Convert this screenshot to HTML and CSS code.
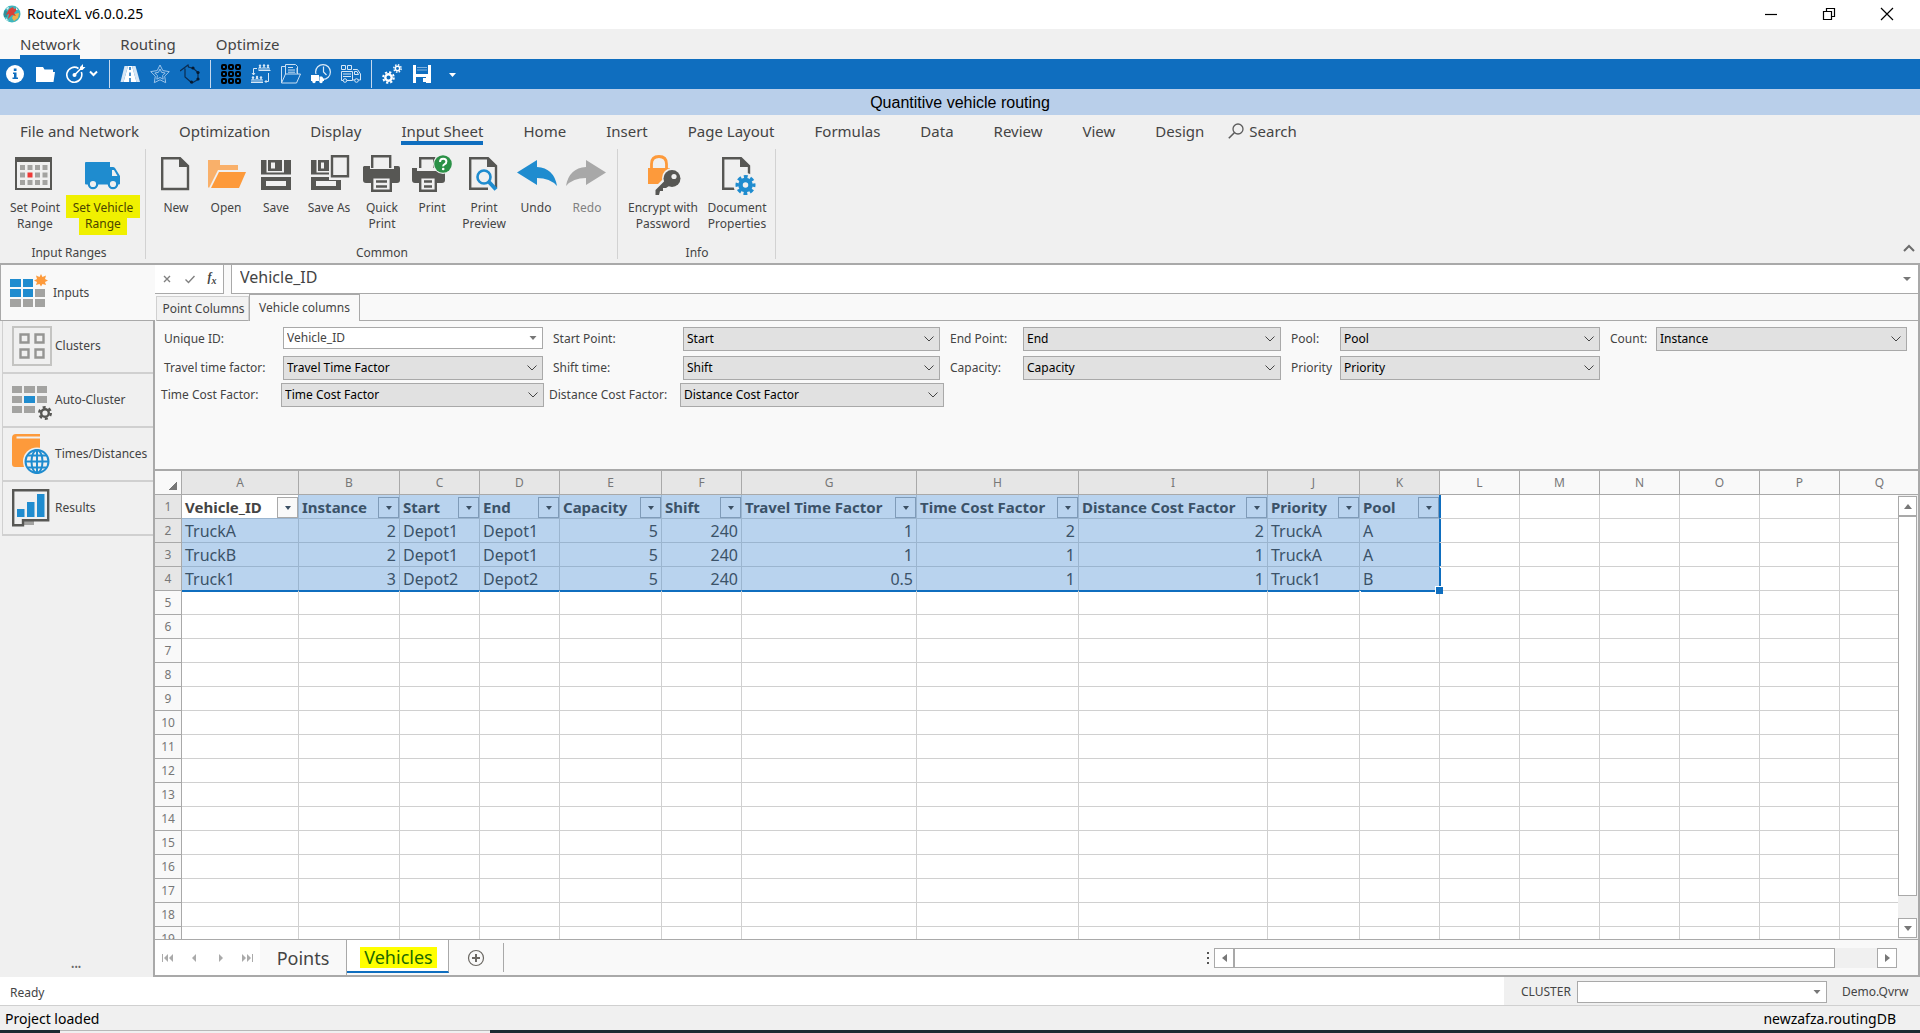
FILE: index.html
```html
<!DOCTYPE html>
<html lang="en">
<head>
<meta charset="utf-8">
<title>RouteXL v6.0.0.25</title>
<link rel="stylesheet" href="styles.css">
</head>
<body>
<header class="titlebar">
  <svg class="app-logo" viewBox="0 0 18 18" aria-hidden="true"><circle cx="9" cy="9" r="8.500" fill="#3fb6bd"/><path d="M1 12a8.500 8.500 0 0 1 1-7l3 2-1 5z" fill="#2f8f9a"/><path d="M11 9l5-1-1 5-4 3-2-3z" fill="#f0b24a"/><path d="M6 4l4-2 1 2 3-1-1 3-2 2 2 3-4-1-4 4 1-5-3 1 2-4z" fill="#d8413a"/><path d="M3 3l3-1-1 3zM13 2l2 3h-2zM3 13l3 3-3-1z" fill="#d9f3f4"/></svg>
  <span class="app-title">RouteXL v6.0.0.25</span>
  <div class="window-buttons">
    <button aria-label="Minimize"><svg viewBox="0 0 14 14"><path d="M1 7.500h12"/></svg></button>
    <button aria-label="Restore"><svg viewBox="0 0 14 14"><path d="M1.500 4.500h8v8h-8zM4.500 4V1.500h8v8H10"/></svg></button>
    <button aria-label="Close"><svg viewBox="0 0 14 14"><path d="M1 1l12 12M13 1L1 13"/></svg></button>
  </div>
</header>

<nav class="page-tabs">
  <button class="page-tab active"><span>Network</span></button>
  <button class="page-tab"><span>Routing</span></button>
  <button class="page-tab"><span>Optimize</span></button>
</nav>

<div class="quickbar">
  <button aria-label="Info"><svg viewBox="0 0 20 20"><circle cx="10" cy="10" r="9" fill="#fff"/><path d="M8 8.500h3.500v5H13V15H7.500v-1.500H9V10H8zM8.800 4.500h2.700V7H8.800z" fill="#0f6ebf"/></svg></button>
  <button aria-label="Open folder"><svg viewBox="0 0 20 20"><path d="M1 3h7l1.500 2.500H18V8h2l-1.500 10H1z" fill="#fff"/></svg></button>
  <button class="wide" aria-label="Target"><svg viewBox="0 0 32 20"><g fill="none" stroke="#fff" stroke-width="1.600"><path d="M12.500 4.500a7.500 7.500 0 1 0 2.800 3.500M8.500 11l7-7"/><path d="M24 7.500l3.500 3.500L31 7.500" stroke-width="2"/></g><path d="M14 3l3-3v3h2.500l-3 3H14z" fill="#fff"/><circle cx="8.500" cy="11" r="2" fill="#fff"/></svg></button>
  <i class="bar-sep"></i>
  <button aria-label="Road"><svg viewBox="0 0 20 20"><path d="M4.500 2H8L3.500 18H.500zM12 2h3.500L20 18h-3.500z" fill="#d6e6f5"/><path d="M8 2h4l4.500 16h-13z" fill="#fff"/><path d="M10 3v3M10 8.500v3.500M10 14v4" stroke="#0f6ebf" stroke-width="1.500"/></svg></button>
  <button aria-label="Star"><svg viewBox="0 0 20 20"><g fill="none" stroke="#9cc4ea"><path d="M10 1l2.800 5.600 6.500 1-4.600 4.600 1 6.500L10 15.800l-5.700 2.900 1-6.500L.700 7.600l6.500-1z"/><path d="M10 5l1.600 3.400 3.600.6-2.600 2.600.6 3.600L10 13.500l-3.200 1.700.6-3.600L4.800 9l3.600-.6z"/></g></svg></button>
  <button aria-label="Polygon"><svg viewBox="0 0 20 20"><path d="M0 7l8-6 .5 2 5 1.500 4.500 4v7L12 19l-7-6V4.500" fill="none" stroke="#0b2c50" stroke-width="1.200"/><g fill="#061a30"><circle cx="13" cy="4" r="1.600"/><circle cx="18" cy="8.500" r="1.600"/><circle cx="18" cy="15" r="1.600"/><circle cx="11.500" cy="18" r="1.600"/></g></svg></button>
  <i class="bar-sep"></i>
  <button aria-label="Matrix"><svg viewBox="0 0 20 20"><g fill="none" stroke="#000" stroke-width="2"><rect x="1" y="1" width="4" height="4" rx="1"/><rect x="8" y="1" width="4" height="4" rx="1"/><rect x="15" y="1" width="4" height="4" rx="1"/><rect x="1" y="8" width="4" height="4" rx="1"/><rect x="8" y="8" width="4" height="4" rx="1"/><rect x="15" y="8" width="4" height="4" rx="1"/><rect x="1" y="15" width="4" height="4" rx="1"/><rect x="8" y="15" width="4" height="4" rx="1"/><rect x="15" y="15" width="4" height="4" rx="1"/></g></svg></button>
  <button aria-label="Groups"><svg viewBox="0 0 20 20"><g fill="none" stroke="#d6e7f6"><path d="M8 6V3.500h2V6M12 6V3h2v3M16 6V3.500h2V6M7.500 6.500h12M1 18v-3h2v3M5 18v-3.500h2V18M9 18v-3h2v3M0 18.500h12M6 4.500H2.500V11M1 9l1.500 2L4 9M17.500 9v8.500H14M15.500 16L14 17.500l1.500 1.500"/></g><g fill="#d6e7f6"><circle cx="9" cy="1.800" r="1.200"/><circle cx="13" cy="1.500" r="1.200"/><circle cx="17" cy="1.800" r="1.200"/><circle cx="2" cy="13.500" r="1.200"/><circle cx="6" cy="13" r="1.200"/><circle cx="10" cy="13.500" r="1.200"/></g></svg></button>
  <button aria-label="Documents"><svg viewBox="0 0 20 20"><path d="M.500 19V2.500H4M16 4v5M.500 19L4.500 10h15L15.500 19zM4.500 10V.500h10l2 2V10M7 3.500h5M7 6h7M7 8.200h7" fill="none" stroke="#c9dff3"/></svg></button>
  <button aria-label="Schedule"><svg viewBox="0 0 20 20"><circle cx="12" cy="8" r="7.400" fill="none" stroke="#dceaf7" stroke-width="1.200"/><path d="M12.500 2.500V8l3 3" fill="none" stroke="#dceaf7" stroke-width="1.200"/><path d="M0 10h9l4 2v8H0z" fill="#0f6ebf"/><path d="M0 11h8v6H0zM8.500 12.500H11l2 2.500v2H8.500z" fill="#fff"/><circle cx="3" cy="17.500" r="1.700" fill="#fff"/><circle cx="10" cy="17.500" r="1.700" fill="#fff"/></svg></button>
  <button aria-label="Fleet"><svg viewBox="0 0 20 20"><path d="M.500 1.500h4v4h-4zM6.500 1.500h4v4h-4zM.500 7.500h11v9H.500zM12 5.500h4.500l3 4.500v6H12M13.500 7.500h2.500l1.500 3h-4zM2 10h8M2 12.500h8" fill="none" stroke="#d6e7f6"/><circle cx="4" cy="16.500" r="1.800" fill="#0f6ebf" stroke="#d6e7f6"/><circle cx="15.500" cy="16.500" r="1.800" fill="#0f6ebf" stroke="#d6e7f6"/></svg></button>
  <i class="bar-sep"></i>
  <button aria-label="Settings"><svg viewBox="0 0 20 20"><g fill="none" stroke="#fff"><circle cx="6.500" cy="13.500" r="3.200" stroke-width="2.400"/><circle cx="6.500" cy="13.500" r="5.300" stroke-width="2" stroke-dasharray="2.200 1.960"/><circle cx="15.500" cy="4.500" r="2.200" stroke-width="1.500"/><circle cx="15.500" cy="4.500" r="3.700" stroke-width="1.400" stroke-dasharray="1.500 1.400"/></g></svg></button>
  <button aria-label="Save project"><svg viewBox="0 0 20 20"><path d="M1 1h18v18H1z" fill="#fff"/><path d="M4 1h12v9H4zM4 13h10v6H4z" fill="#0f6ebf"/><path d="M5 3.500h10M5 6h10" stroke="#7fb0de"/><path d="M11 14h3v4h-3z" fill="#fff"/></svg></button>
  <button aria-label="More"><svg viewBox="0 0 20 20"><path d="M7 9h7l-3.500 4z" fill="#fff"/></svg></button>
</div>

<div class="doc-title">Quantitive vehicle routing</div>

<nav class="ribbon-tabs">
  <button>File and Network</button>
  <button>Optimization</button>
  <button>Display</button>
  <button class="active">Input Sheet</button>
  <button>Home</button>
  <button>Insert</button>
  <button>Page Layout</button>
  <button>Formulas</button>
  <button>Data</button>
  <button>Review</button>
  <button>View</button>
  <button>Design</button>
  <button class="search"><svg viewBox="0 0 16 16"><circle cx="10" cy="6" r="5" fill="none" stroke="#5c5c5c" stroke-width="1.300"/><path d="M6.300 9.700L.800 15.200" stroke="#5c5c5c" stroke-width="1.600"/></svg>Search</button>
</nav>

<section class="ribbon">
  <div class="ribbon-group">
    <div class="ribbon-items">
      <button class="tool w68"><svg viewBox="0 0 44 44"><path d="M3 5h35v31H3z" fill="none" stroke="#575754" stroke-width="2"/><path d="M2 4h37v5H2z" fill="#575754"/><path d="M7 12h5v5H7zM14.500 12h5v5h-5zM22 12h5v5h-5zM29.500 12h5v5h-5zM7 19.500h5v5H7zM22 19.500h5v5h-5zM29.500 19.500h5v5h-5zM7 27h5v5H7zM14.500 27h5v5h-5zM22 27h5v5h-5zM29.500 27h5v5h-5z" fill="#a3a3a1"/><path d="M14.500 19.500h5v5h-5z" fill="#ee3a38"/></svg><span>Set Point<br>Range</span></button>
      <button class="tool w68 marked"><svg viewBox="0 0 44 44"><path d="M4 10q0-1 1-1h24v5h3q1 0 2 1l5 8v7.500q0 1-1 1H5q-1 0-1-1z" fill="#1f8ccf"/><path d="M31 17h2l3.500 6H31z" fill="#f0f0f0"/><g fill="#f0f0f0" stroke="#1f8ccf" stroke-width="2.200"><circle cx="12" cy="31" r="4.200"/><circle cx="32" cy="31" r="4.200"/></g></svg><span><mark>Set Vehicle</mark><br><mark class="short">Range</mark></span></button>
    </div>
    <h2>Input Ranges</h2>
  </div>
  <div class="ribbon-group">
    <div class="ribbon-items">
      <button class="tool w50"><svg viewBox="0 0 44 44"><path d="M8.200 5.200H26L34 13v23H8.200z" fill="none" stroke="#575754" stroke-width="2.400"/><path d="M25 4l10 10H25z" fill="#575754"/></svg><span>New</span></button>
      <button class="tool w50"><svg viewBox="0 0 44 44"><path d="M4 7h12v5h18v5H14L5 35l-1-1z" fill="#f9b06a"/><path d="M15 19h27l-7 16H7z" fill="#fd9a3b"/></svg><span>Open</span></button>
      <button class="tool w50"><svg viewBox="0 0 44 44"><path d="M7 7h30v30H7z" fill="#575754"/><path d="M12.500 7H14v11h14V7h2v12.500H12.500zM17 9.500h4v6h-4zM7 21.500h30V24H7zM12 28h20v5H12z" fill="#f0f0f0"/></svg><span>Save</span></button>
      <button class="tool w56"><svg viewBox="0 0 44 44"><path d="M4 7h20v17h10v13H4z" fill="#575754"/><path d="M9.500 7H11v11h13v1.500H9.500zM14 9.500h3v6h-3zM4 21.500h20V24H4zM9 28h20v5H9z" fill="#f0f0f0"/><path d="M22 1h22v26H22z" fill="#f0f0f0"/><path d="M25 3.200h16v20H25z" fill="none" stroke="#575754" stroke-width="2.400"/></svg><span>Save As</span></button>
      <button class="tool w50"><svg viewBox="0 0 44 44"><path d="M12.200 15V3.200h18V15" fill="none" stroke="#575754" stroke-width="2.400"/><path d="M4 13h6v3h24v-3h4q2 0 2 2v12q0 3-3 3H6q-3 0-3-3V14z" fill="#575754"/><path d="M12.200 24.200h18.600v13.600H12.200z" fill="#f0f0f0" stroke="#575754" stroke-width="2.400"/><path d="M16 28.500h11M16 33.500h11" stroke="#575754" stroke-width="2.400"/></svg><span>Quick<br>Print</span></button>
      <button class="tool w50"><svg viewBox="0 0 44 44"><path d="M10.200 15V5.200h14V15" fill="none" stroke="#575754" stroke-width="2.400"/><path d="M2 15h5v3h22l6 1v8q0 3-3 3H5q-3 0-3-3z" fill="#575754"/><path d="M10.200 24.200h15.600v13.600H10.200z" fill="#f0f0f0" stroke="#575754" stroke-width="2.400"/><path d="M14 28.500h8M14 33.500h8" stroke="#575754" stroke-width="2.400"/><circle cx="33" cy="11" r="10" fill="#f0f0f0"/><circle cx="33" cy="11" r="8.800" fill="#2b9147"/><path d="M30 9q0-3.300 3.200-3.300T36.400 8.600q0 1.700-1.700 2.600T33.200 13.400" fill="none" stroke="#fff" stroke-width="2"/><circle cx="33.200" cy="16" r="1.300" fill="#fff"/></svg><span>Print</span></button>
      <button class="tool w54"><svg viewBox="0 0 44 44"><path d="M26 35.800H8.200V5.200H26L34 13v22" fill="none" stroke="#575754" stroke-width="2.400"/><path d="M25 4l10 10H25z" fill="#575754"/><circle cx="22" cy="24" r="9" fill="#f0f0f0"/><circle cx="22" cy="24" r="6.500" fill="none" stroke="#1f8ccf" stroke-width="2.600"/><path d="M27 29l7 7.500" stroke="#1f8ccf" stroke-width="4"/></svg><span>Print<br>Preview</span></button>
      <button class="tool w50"><svg viewBox="0 0 44 44"><path d="M3 19.500L23 7v7q17 1 20 19-7-8-20-8v7z" fill="#1f8ccf"/></svg><span>Undo</span></button>
      <button class="tool w52 disabled"><svg viewBox="0 0 44 44"><path d="M41 19.500L21 7v7Q4 15 1 33q7-8 20-8v7z" fill="#a8a8a8"/></svg><span>Redo</span></button>
    </div>
    <h2>Common</h2>
  </div>
  <div class="ribbon-group">
    <div class="ribbon-items">
      <button class="tool w80"><svg viewBox="0 0 44 44"><path d="M10.500 16v-5q0-7.500 7.500-7.500t7.500 7.500v5" fill="none" stroke="#fd9a3b" stroke-width="2.800"/><path d="M7 15h22v16H7z" fill="#fd9a3b"/><circle cx="31" cy="25" r="10" fill="#f0f0f0"/><path d="M13 40V35l11-11 6 6-5 5-3 1v3h-3v4h-6z" fill="#f0f0f0"/><circle cx="31" cy="25.500" r="8.500" fill="#575754"/><path d="M14.500 42v-5l10-10 5 5-4.500 3h-3v3h-3l-1 4z" fill="#575754"/><circle cx="33" cy="23.500" r="2.600" fill="#f0f0f0"/></svg><span>Encrypt with<br>Password</span></button>
      <button class="tool w68"><svg viewBox="0 0 44 44"><path d="M20 35.800H8.200V5.200H26L34 13v9" fill="none" stroke="#575754" stroke-width="2.400"/><path d="M25 4l10 10H25z" fill="#575754"/><circle cx="30.500" cy="32" r="12" fill="#f0f0f0"/><circle cx="30.500" cy="32" r="5" fill="none" stroke="#1f8ccf" stroke-width="4.500"/><circle cx="30.500" cy="32" r="8.300" fill="none" stroke="#1f8ccf" stroke-width="3.400" stroke-dasharray="3.800 2.720" stroke-dashoffset="1.900"/></svg><span>Document<br>Properties</span></button>
    </div>
    <h2>Info</h2>
  </div>
  <button class="collapse" aria-label="Collapse ribbon"><svg viewBox="0 0 12 8"><path d="M1 7l5-5 5 5"/></svg></button>
</section>

<main class="workspace">
  <aside class="sidebar">
    <button class="side-item active"><svg viewBox="0 0 40 40"><path d="M0 6h11v8H0zM13 6h10v8H13zM0 16h11v8H0zM13 16h10v8H13z" fill="#1f8ccf"/><path d="M25 16h10v8H25zM0 26h11v8H0zM13 26h10v8H13zM25 26h10v8H25z" fill="#a3a3a1"/><path d="M31 1l1.500 3L36 2.500 35 6l3 1.500-3 1.500 1 3-3.500-1L31 13.500 29.500 11 26 12l1-3-3-1.500L27 6l-1-3.500L29.500 4z" fill="#fd9a3b"/></svg>Inputs</button>
    <button class="side-item"><svg viewBox="0 0 40 40"><path d="M1 1h38v38H1z" fill="none" stroke="#c4c4c2" stroke-width="2"/><path d="M8.500 8.500h8v8h-8zM23.500 8.500h8v8h-8zM8.500 23.500h8v8h-8zM23.500 23.500h8v8h-8z" fill="none" stroke="#959593" stroke-width="2.400"/></svg>Clusters</button>
    <button class="side-item"><svg viewBox="0 0 40 40"><path d="M0 6h10v7H0zM12 6h11v7H12zM25 6h10v7H25zM0 16h10v7H0zM25 16h10v7H25zM0 26h10v7H0zM12 26h11v7H12z" fill="#a3a3a1"/><path d="M12 16h11v7H12z" fill="#1f8ccf"/><circle cx="33" cy="33" r="7.500" fill="#f0f0f0"/><circle cx="33" cy="33" r="3.800" fill="none" stroke="#575754" stroke-width="2.400"/><circle cx="33" cy="33" r="5.800" fill="none" stroke="#575754" stroke-width="2.400" stroke-dasharray="3 3.070"/></svg>Auto-Cluster</button>
    <button class="side-item"><svg viewBox="0 0 40 40"><path d="M0 4q0-4 4-4h24v2.500H4.500v2H28V33H3q-3 0-3-3z" fill="#fd9a3b"/><circle cx="25" cy="27.500" r="14" fill="#f0f0f0"/><g fill="none" stroke="#1f8ccf" stroke-width="2"><circle cx="25" cy="27.500" r="11.500"/><ellipse cx="25" cy="27.500" rx="5.500" ry="11.500"/><path d="M25 16v23M13.500 27.500h23M15.500 21.500h19M15.500 33.500h19"/></g></svg>Times/Distances</button>
    <button class="side-item"><svg viewBox="0 0 40 40"><path d="M12 33h10v4H12z" fill="#a3a3a1"/><path d="M1.200 2.200h35v30H11v5H1.200z" fill="none" stroke="#575754" stroke-width="2.400"/><path d="M5 21h7.500v8H5zM15 14h7.500v15H15zM25 6h7.500v23H25z" fill="#1f8ccf"/></svg>Results</button>
    <span class="side-more">•••</span>
  </aside>

  <section class="content">
    <div class="formula-row">
      <div class="formula-tools">
        <button aria-label="Cancel"><svg viewBox="0 0 10 10"><path d="M2 2l6 6M8 2L2 8"/></svg></button>
        <button aria-label="Accept"><svg viewBox="0 0 10 10"><path d="M.500 5.500L3.500 8.500 9.500 2"/></svg></button>
        <button class="fx" aria-label="Insert function">f<sub>x</sub></button>
      </div>
      <label class="formula-box"><input type="text" aria-label="Formula" value="Vehicle_ID"><i class="caret"></i></label>
    </div>

    <div class="column-tabs">
      <button>Point Columns</button>
      <button class="active">Vehicle columns</button>
    </div>

    <form class="fields">
      <div class="field-grid">
        <label for="f-id">Unique ID:</label><select id="f-id" class="plain"><option>Vehicle_ID</option></select>
        <label for="f-start">Start Point:</label><select id="f-start"><option>Start</option></select>
        <label for="f-end">End Point:</label><select id="f-end"><option>End</option></select>
        <label for="f-pool">Pool:</label><select id="f-pool"><option>Pool</option></select>
        <label for="f-count">Count:</label><select id="f-count"><option>Instance</option></select>
        <label for="f-ttf">Travel time factor:</label><select id="f-ttf"><option>Travel Time Factor</option></select>
        <label for="f-shift">Shift time:</label><select id="f-shift"><option>Shift</option></select>
        <label for="f-cap">Capacity:</label><select id="f-cap"><option>Capacity</option></select>
        <label for="f-prio">Priority</label><select id="f-prio"><option>Priority</option></select>
      </div>
      <div class="field-grid costs">
        <label for="f-tcf">Time Cost Factor:</label><select id="f-tcf"><option>Time Cost Factor</option></select>
        <label for="f-dcf">Distance Cost Factor:</label><select id="f-dcf"><option>Distance Cost Factor</option></select>
      </div>
    </form>

    <div class="sheet">
      <table id="grid"></table>
      <div class="vscroll">
        <button aria-label="Scroll up"><i class="tri up"></i></button>
        <div class="vthumb"></div>
        <button class="last" aria-label="Scroll down"><i class="tri down"></i></button>
      </div>
    </div>

    <div class="sheet-bar">
      <div class="sheet-nav">
        <button aria-label="First sheet"><svg viewBox="0 0 12 10"><path d="M0 1h1v8H0zM6 1v8L2 5zM11 1v8L7 5z"/></svg></button>
        <button aria-label="Previous sheet"><svg viewBox="0 0 12 10"><path d="M8 1v8L4 5z"/></svg></button>
        <button aria-label="Next sheet"><svg viewBox="0 0 12 10"><path d="M4 1v8l4-4z"/></svg></button>
        <button aria-label="Last sheet"><svg viewBox="0 0 12 10"><path d="M11 1h1v8h-1zM1 1v8l4-4zM6 1v8l4-4z"/></svg></button>
      </div>
      <button class="sheet-tab">Points</button>
      <button class="sheet-tab active"><mark>Vehicles</mark></button>
      <button class="add-sheet" aria-label="Add sheet"><svg viewBox="0 0 18 18"><circle cx="9" cy="9" r="7.500" fill="none" stroke="#6b6863" stroke-width="1.200"/><path d="M9 5v8M5 9h8" stroke="#6b6863" stroke-width="2"/></svg></button>
      <div class="hscroll-area">
        <i class="grip"></i>
        <div class="hscroll">
          <button aria-label="Scroll left"><i class="tri left"></i></button>
          <div class="hthumb"></div>
          <button class="last" aria-label="Scroll right"><i class="tri right"></i></button>
        </div>
      </div>
    </div>
  </section>
</main>

<footer>
  <div class="status">
    <span class="ready">Ready</span>
    <div class="cluster">
      <label for="cluster">CLUSTER</label>
      <select id="cluster" class="plain"><option></option></select>
      <span>Demo.Qvrw</span>
    </div>
  </div>
  <div class="project"><span>Project loaded</span><span>newzafza.routingDB</span></div>
  <div class="taskbar"><i></i></div>
</footer>
<script src="grid.js"></script>
</body>
</html>
```
FILE: styles.css
```css
* { box-sizing: border-box; }
body {
  margin: 0;
  height: 100vh;
  display: flex;
  flex-direction: column;
  overflow: hidden;
  background: #f0f0f0;
  color: #444;
  font: 12px/16px "Noto Sans", sans-serif;
}
button {
  border: 0;
  padding: 0;
  background: none;
  color: inherit;
  font: inherit;
}
svg { display: block; }

/* title bar */
.titlebar {
  display: flex;
  align-items: center;
  height: 29px;
  flex: none;
  padding: 0 4px 1px 3px;
  background: #fff;
  color: #000;
}
.app-logo { width: 18px; height: 18px; }
.app-title { margin-left: 6px; font-size: 14px; }
.window-buttons { display: flex; margin-left: auto; }
.window-buttons button { width: 58px; display: flex; justify-content: center; }
.window-buttons svg { width: 14px; height: 14px; fill: none; stroke: #000; stroke-width: 1.200; }

/* top tabs */
.page-tabs { display: flex; height: 30px; flex: none; font-size: 15px; }
.page-tab { display: flex; padding: 0 20px; }
.page-tab span { padding-top: 7px; height: 30px; border-bottom: 4px solid transparent; }
.page-tab.active { background: #f9f9f9; }
.page-tab.active span { border-color: #0f6ebf; }

/* quick access bar */
.quickbar {
  display: flex;
  align-items: center;
  height: 30px;
  flex: none;
  background: #0f6ebf;
}
.quickbar button { width: 30px; display: flex; justify-content: center; }
.quickbar button.wide { width: 44px; justify-content: flex-start; padding-left: 6px; }
.quickbar svg { width: 20px; height: 20px; }
.quickbar .wide svg { width: 32px; }
.bar-sep { width: 1px; height: 28px; margin: 0 5px; background: #c5d9ee; }

.doc-title {
  height: 26px;
  flex: none;
  background: #b9cfea;
  color: #000;
  font: 16px/28px "Liberation Sans", sans-serif;
  text-align: center;
}

/* ribbon */
.ribbon-tabs { display: flex; height: 30px; flex: none; padding-left: 20px; gap: 40px; font-size: 15px; }
.ribbon-tabs button { padding-top: 6px; border-bottom: 4px solid transparent; white-space: nowrap; }
.ribbon-tabs .active { border-color: #0f6ebf; }
.ribbon-tabs .search { display: flex; align-items: center; gap: 5px; margin-left: -16px; }
.ribbon-tabs .search svg { width: 16px; height: 16px; }
.ribbon {
  display: flex;
  align-items: flex-start;
  flex: none;
  height: 120px;
  padding-top: 4px;
  border-bottom: 2px solid #a9a9a9;
}
.ribbon-group {
  display: flex;
  flex-direction: column;
  justify-content: space-between;
  height: 110px;
  padding: 4px 4px 0 5px;
  border-right: 1px solid #d2d2d2;
}
.ribbon-group:first-child { padding: 4px 8px 0 1px; }
.ribbon-items { display: flex; align-items: flex-start; }
.ribbon h2 { margin: 0; font-size: 12px; font-weight: 400; line-height: 12px; text-align: center; }
.tool { display: flex; flex-direction: column; align-items: center; gap: 3px; white-space: nowrap; }
.tool svg { width: 44px; height: 44px; }
.tool.disabled { color: #808080; }
.w50 { width: 50px; }
.w52 { width: 52px; }
.w54 { width: 54px; }
.w56 { width: 56px; }
.w68 { width: 68px; }
.w80 { width: 80px; }
.marked span { margin: 0 -8px; }
.marked mark { background: #f0f000; color: #4a4500; padding: 4px 7px 2px; }
.marked .short { padding: 2px 6px 3px; }
.collapse { margin: auto 5px 11px auto; }
.collapse svg { width: 12px; height: 8px; fill: none; stroke: #6c6c6c; stroke-width: 2; }

/* workspace */
.workspace { flex: 1; display: flex; min-height: 0; }
.sidebar { width: 153px; flex: none; display: flex; flex-direction: column; padding-left: 2px; }
.side-item {
  display: flex;
  align-items: center;
  gap: 3px;
  height: 54px;
  flex: none;
  padding-left: 9px;
  border: solid #d0d0d0;
  border-width: 0 0 2px 1px;
  white-space: nowrap;
}
.side-item svg { width: 40px; height: 40px; flex: none; }
.side-item.active {
  height: 56px;
  margin: 0 -2px -1px;
  background: #f9f9f9;
  border: 1px solid #a9a9a9;
  border-width: 0 0 1px 1px;
  position: relative;
}
.side-more { margin: auto 0 2px 69px; font-size: 9px; color: #6a6a6a; }

.content {
  flex: 1;
  min-width: 0;
  display: flex;
  flex-direction: column;
  background: #f9f9f9;
  border: 2px solid #a9a9a9;
  border-top: 0;
}
.formula-row { display: flex; gap: 7px; height: 29px; flex: none; }
.formula-tools {
  display: flex;
  align-items: center;
  justify-content: space-around;
  width: 69px;
  background: #fff;
  border: 1px solid #a9a9a9;
  border-width: 0 1px 1px 0;
}
.formula-tools svg { width: 10px; height: 10px; fill: none; stroke: #808080; stroke-width: 1.400; }
.fx { font: italic bold 12px/12px "Liberation Serif", serif; }
.fx sub { font-size: 10px; }
.formula-box {
  flex: 1;
  display: flex;
  align-items: center;
  background: #fff;
  border: 1px solid #a9a9a9;
  border-width: 0 0 1px 1px;
  padding-right: 7px;
}
.formula-box input {
  flex: 1;
  border: 0;
  padding: 0 0 4px 8px;
  background: none;
  color: #444;
  font: 16px/20px "Noto Sans", sans-serif;
}
.caret { border: solid transparent; border-width: 4px 4px 0; border-top-color: #777; }

.column-tabs { display: flex; align-items: flex-end; height: 27px; flex: none; padding-left: 1px; font-size: 12px; }
.column-tabs::after { content: ""; flex: 1; border-bottom: 1px solid #a9a9a9; }
.column-tabs button {
  width: 93px;
  height: 25px;
  padding-left: 2px;
  background: #f2f2f2;
  border: 1px solid #d0d0d0;
  border-bottom-color: #a9a9a9;
  white-space: nowrap;
}
.column-tabs .active {
  width: 111px;
  height: 27px;
  padding: 0 0 1px;
  background: #f9f9f9;
  border: 1px solid #a9a9a9;
  border-bottom: 0;
}

.fields { height: 150px; flex: none; padding: 6px 11px 0 6px; border-bottom: 2px solid #a9a9a9; }
.field-grid {
  display: grid;
  grid-template-columns: 119px 260fr 140px 257fr 83px 258fr 59px 260fr 56px 251fr;
  row-gap: 5px;
  padding-left: 3px;
}
.field-grid label { padding: 4px 0 0 10px; white-space: nowrap; }
.field-grid label:first-child, .field-grid label[for="f-ttf"] { padding-left: 0; }
.field-grid.costs {
  grid-template-columns: 120px 263fr 136px 264fr 194px 769fr;
  margin-top: 3px;
  padding-left: 0;
}
.field-grid.costs label + select + label { padding-left: 5px; }
select {
  appearance: none;
  min-width: 0;
  height: 24px;
  padding: 0 4px 0 3px;
  border: 1px solid #a9a9a9;
  border-radius: 0;
  background: #e1e1e1 url("data:image/svg+xml,%3Csvg xmlns='http://www.w3.org/2000/svg' width='10' height='6'%3E%3Cpath d='M.5 .5L5 5 9.500 .5' fill='none' stroke='%23444'/%3E%3C/svg%3E") no-repeat right 5px center;
  color: #000;
  font: 12px/16px "Noto Sans", sans-serif;
}
select.plain {
  height: 22px;
  background: #fff url("data:image/svg+xml,%3Csvg xmlns='http://www.w3.org/2000/svg' width='8' height='4'%3E%3Cpath d='M.5 0h7L4 4z' fill='%23777'/%3E%3C/svg%3E") no-repeat right 5px center;
  color: #444;
}

/* spreadsheet */
.sheet { flex: 1; min-height: 0; position: relative; overflow: hidden; background: #fff; border-bottom: 1px solid #a9a9a9; }
table { table-layout: fixed; width: 1px; border-spacing: 0; font-size: 16px; }
th, td {
  height: 24px;
  padding: 0 3px;
  border: solid #d0d0d0;
  border-width: 0 1px 1px 0;
  line-height: 20px;
  text-align: left;
  white-space: nowrap;
  font-weight: 400;
}
thead th, tbody th {
  padding: 0;
  background: #f9f9f9;
  border-color: #a9a9a9;
  color: #777;
  font-size: 12px;
  text-align: center;
}
thead .in, tbody th.in { background: #e6e6e6; }
thead .corner { background: #f9f9f9 linear-gradient(135deg, transparent 50%, #777 50%) no-repeat right 4px bottom 4px / 9px 9px; }
.sel { background: #b9d3ee; border-color: #9bb5cf; color: #3b5268; }
.num { text-align: right; }
.head { padding-right: 0; font-size: 15px; font-weight: 700; }
.head div { display: flex; justify-content: space-between; align-items: center; }
.head button {
  display: flex;
  align-items: center;
  justify-content: center;
  width: 21px;
  height: 21px;
  margin-top: 2px;
  border: 1px solid #7f9bb8;
}
.head .caret { border-width: 4px 3px 0; border-top-color: #3b4f63; }
.head.cursor { background: #fff; color: #444; }
.head.cursor button { border-color: #a9a9a9; background: #f9f9f9; }
.edge-r { border-right-color: #0f6ebf; box-shadow: 1px 0 #0f6ebf; }
.edge-b { border-bottom-color: #0f6ebf; box-shadow: 0 1px #0f6ebf; }
.edge-r.edge-b { position: relative; box-shadow: 1px 1px #0f6ebf; }
.edge-r.edge-b::after {
  content: "";
  position: absolute;
  right: -4px;
  bottom: -4px;
  width: 7px;
  height: 7px;
  background: #0f6ebf;
  border: solid #fff;
  border-width: 1px 0 0 1px;
}

/* scroll bars */
.vscroll {
  position: absolute;
  top: 24px;
  right: 0;
  bottom: 0;
  width: 20px;
  display: flex;
  flex-direction: column;
  padding: 1px 1px 1px 0;
  background: #f0f0f0;
}
.vscroll button, .hscroll button { display: grid; place-items: center; width: 19px; height: 20px; background: #fff; border: 1px solid #a9a9a9; }
.vscroll .last, .hscroll .last { margin: auto 0 0 auto; }
.vthumb { height: 86%; background: #fff; border: 1px solid #a9a9a9; }
.tri { border: 4px solid transparent; }
.tri.up { border-top: 0; border-bottom: 5px solid #777; }
.tri.down { border-bottom: 0; border-top: 5px solid #777; }
.tri.left { border-left: 0; border-right: 5px solid #777; }
.tri.right { border-right: 0; border-left: 5px solid #777; }

/* sheet tabs */
.sheet-bar { display: flex; height: 35px; flex: none; font-size: 18px; }
.sheet-nav { display: flex; justify-content: space-around; align-items: center; width: 105px; background: #fff; }
.sheet-nav svg { width: 12px; height: 10px; fill: #aaa; }
.sheet-tab { width: 87px; border-right: 1px solid #a9a9a9; }
.sheet-tab.active { width: 102px; margin-bottom: 2px; padding: 3px 0 0 2px; background: #fff; border-bottom: 2px solid #0f6ebf; }
.sheet-tab mark { padding: 0 4px; background: #ff0; color: #1b6a00; line-height: 21px; display: inline-block; }
.add-sheet { width: 55px; height: 29px; margin-top: 3px; display: grid; place-items: center; border-right: 1px solid #a9a9a9; }
.add-sheet svg { width: 18px; height: 18px; }
.hscroll-area { flex: 1; display: flex; align-items: center; justify-content: flex-end; gap: 5px; padding-right: 21px; }
.grip { width: 2px; height: 12px; background: repeating-linear-gradient(#555 0 2px, transparent 2px 5px); }
.hscroll { width: 49%; display: flex; background: #f0f0f0; }
.hscroll button { width: 20px; height: 20px; }
.hthumb { width: 88%; background: #fff; border: 1px solid #a9a9a9; }

/* footer */
footer { flex: none; }
.status { display: flex; height: 29px; background: #fff; border-bottom: 1px solid #d0d0d0; }
.ready { padding: 8px 10px 0; }
.cluster {
  display: flex;
  align-items: center;
  width: 416px;
  margin-left: auto;
  padding: 1px 0 0 17px;
  background: #f0f0f0;
}
.cluster select { width: 250px; margin: 0 15px 0 6px; }
.project { display: flex; justify-content: space-between; height: 24px; padding: 0 24px 0 5px; color: #000; font-size: 14px; line-height: 26px; }
.taskbar { height: 3px; background: #1b2a31; padding-left: 60px; }
.taskbar i { display: block; width: 430px; height: 3px; background: #f0f0f0; border-top: 1px solid #b8b8b8; }
```
FILE: grid.js
```javascript
const widths = [27, 117, 101, 80, 80, 102, 80, 175, 162, 189, 92, 80, 80, 80, 80, 80, 80, 80];
const letters = "ABCDEFGHIJKLMNOPQ";
const headings = ["Vehicle_ID", "Instance", "Start", "End", "Capacity", "Shift", "Travel Time Factor",
  "Time Cost Factor", "Distance Cost Factor", "Priority", "Pool"];
const rows = [
  ["TruckA", 2, "Depot1", "Depot1", 5, 240, 1, 2, 2, "TruckA", "A"],
  ["TruckB", 2, "Depot1", "Depot1", 5, 240, 1, 1, 1, "TruckA", "A"],
  ["Truck1", 3, "Depot2", "Depot2", 5, 240, 0.5, 1, 1, "Truck1", "B"]
];
const last = headings.length - 1;

let html = "<colgroup>" + widths.map(w => `<col style="width:${w}px">`).join("") + "</colgroup>";
html += '<thead><tr><th class="corner"></th>' +
  [...letters].map((c, i) => `<th class="${i <= last ? "in" : ""}">${c}</th>`).join("") + "</tr></thead><tbody>";

html += '<tr><th class="in">1</th>' + [...letters].map((c, i) => i > last ? "<td></td>" :
  `<td class="sel head${i === 0 ? " cursor" : ""}${i === last ? " edge-r" : ""}"><div>${headings[i]}` +
  `<button aria-label="Filter ${headings[i]}"><i class="caret"></i></button></div></td>`).join("") + "</tr>";

for (let r = 2; r <= 19; r++) {
  const data = rows[r - 2];
  html += `<tr><th class="${data ? "in" : ""}">${r}</th>`;
  for (let i = 0; i < letters.length; i++) {
    if (!data || i > last) { html += "<td></td>"; continue; }
    const cls = ["sel"];
    if (typeof data[i] === "number") cls.push("num");
    if (i === last) cls.push("edge-r");
    if (r === rows.length + 1) cls.push("edge-b");
    html += `<td class="${cls.join(" ")}">${data[i]}</td>`;
  }
  html += "</tr>";
}
document.getElementById("grid").innerHTML = html + "</tbody>";
```
